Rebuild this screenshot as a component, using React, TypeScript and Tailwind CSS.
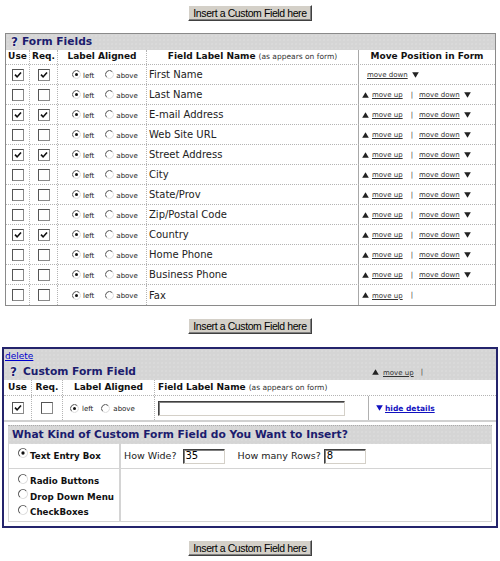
import React from "react";

const fields: [string, boolean][] = [
  ["First Name", true],
  ["Last Name", false],
  ["E-mail Address", true],
  ["Web Site URL", false],
  ["Street Address", true],
  ["City", false],
  ["State/Prov", false],
  ["Zip/Postal Code", false],
  ["Country", true],
  ["Home Phone", false],
  ["Business Phone", false],
  ["Fax", false],
];

function Up({ className = "" }: { className?: string }) {
  return (
    <svg width="7" height="6" viewBox="0 0 7 6" className={className}>
      <path d="M3.5 0.3 L6.8 5.7 L0.2 5.7Z" fill="#222" />
    </svg>
  );
}

function Down({ className = "", color = "#222" }: { className?: string; color?: string }) {
  return (
    <svg width="7" height="6" viewBox="0 0 7 6" className={className}>
      <path d="M0.2 0.3 L6.8 0.3 L3.5 5.7Z" fill={color} />
    </svg>
  );
}

function Check({ checked }: { checked: boolean }) {
  return (
    <span className="inline-flex w-[12px] h-[12px] items-center justify-center bg-white border border-t-[#555] border-l-[#555] border-r-[#8a8a8a] border-b-[#8a8a8a]">
      {checked && (
        <svg width="8" height="8" viewBox="0 0 8 8">
          <path d="M1 3.6 L3.1 5.9 L7 1.4" stroke="#111" strokeWidth="1.6" fill="none" />
        </svg>
      )}
    </span>
  );
}

function Radio({ on, size = 9, className = "" }: { on: boolean; size?: number; className?: string }) {
  return (
    <svg width={size} height={size} viewBox="0 0 9 9" className={className}>
      <circle cx="4.5" cy="4.5" r="4" fill="white" />
      <path d="M1.67 7.33 A4 4 0 0 1 7.33 1.67" stroke="#555" strokeWidth="1" fill="none" />
      <path d="M7.33 1.67 A4 4 0 0 1 1.67 7.33" stroke="#dcdcdc" strokeWidth="1" fill="none" />
      {on && <circle cx="4.5" cy="4.5" r="1.5" fill="#111" />}
    </svg>
  );
}

function InsertButton() {
  return (
    <div className="flex justify-center">
      <button className="h-[16px] w-[124px] bg-[#d4d0c8] border border-t-white border-l-white border-r-[#404040] border-b-[#404040] shadow-[inset_-1px_-1px_0_#808080] text-[10.5px] tracking-[-0.4px] leading-none text-black font-['Liberation_Sans',Arial,sans-serif] flex items-center justify-center">
        Insert a Custom Field here
      </button>
    </div>
  );
}

function Help() {
  return (
    <span className="text-[12px] font-bold text-[#1c1c6e] [text-shadow:0_0_1px_#fff,0_0_2px_#fff] leading-none">
      ?
    </span>
  );
}

const linkCls = "underline text-[7px] text-[#333] leading-none mt-[2px]";

function MoveCell({ first, last }: { first: boolean; last: boolean }) {
  if (first)
    return (
      <div className="flex items-center pl-[8px]">
        <span className={linkCls}>move down</span>
        <Down className="ml-[4px]" />
      </div>
    );
  return (
    <div className="flex items-center pl-[3px]">
      <Up />
      <span className={linkCls + " ml-[3px]"}>move up</span>
      <span className="ml-[8px] text-[7px] text-[#333] leading-none mt-[1px]">|</span>
      {!last && (
        <>
          <span className={linkCls + " ml-[6px]"}>move down</span>
          <Down className="ml-[4px]" />
        </>
      )}
    </div>
  );
}

const tiny = "text-[7px] text-[#222] leading-none mt-[3px]";

function LabelAligned({ pl }: { pl: string }) {
  return (
    <div className={"flex items-center " + pl}>
      <Radio on />
      <span className={"ml-[2px] " + tiny}>left</span>
      <Radio on={false} className="ml-[11px]" />
      <span className={"ml-[2px] " + tiny}>above</span>
    </div>
  );
}

const dot = "border-dotted border-[#b4b4b4]";
const grayBg =
  "bg-[#d5d5d5] bg-[radial-gradient(circle,#dfdfdf_0.6px,transparent_0.8px)] bg-[length:4px_4px]";

export default function App() {
  return (
    <div className="w-[500px] h-[561px] bg-white font-['DejaVu_Sans',Verdana,sans-serif] text-[#222] overflow-hidden">
      <div className="pt-[5px]">
        <InsertButton />
      </div>

      {/* Form Fields panel */}
      <div className="mt-[12px] ml-[5px] w-[491px] border border-[#8a8a8a]">
        <div className={"h-[16px] flex items-center pl-[5px] gap-[4px] " + grayBg}>
          <Help />
          <span className="text-[10.7px] font-bold text-[#1c1c6e] leading-none">Form Fields</span>
        </div>
        <div className={"grid grid-cols-[24px_28px_89px_212px_1fr] h-[15px] border-b " + dot}>
          <div className={"flex items-center justify-center border-r text-[9px] font-bold text-[#111] " + dot}>Use</div>
          <div className={"flex items-center justify-center border-r text-[9px] font-bold text-[#111] " + dot}>Req.</div>
          <div className={"flex items-center justify-center border-r text-[9px] font-bold text-[#111] " + dot}>Label Aligned</div>
          <div className="flex items-center justify-center border-r border-[#a8a8a8] text-[9px] font-bold text-[#111]">
            Field Label Name<span className="ml-[3px] font-normal text-[7.5px] text-[#333]">(as appears on form)</span>
          </div>
          <div className="flex items-center justify-center text-[9px] font-bold text-[#111]">Move Position in Form</div>
        </div>
        {fields.map(([name, checked], i) => (
          <div
            key={name}
            className={
              "grid grid-cols-[24px_28px_89px_212px_1fr] h-[20px] " +
              (i < fields.length - 1 ? "border-b " + dot : "")
            }
          >
            <div className={"flex items-center justify-center border-r " + dot}>
              <Check checked={checked} />
            </div>
            <div className={"flex items-center justify-center border-r " + dot}>
              <Check checked={checked} />
            </div>
            <div className={"border-r flex " + dot}>
              <LabelAligned pl="pl-[14px]" />
            </div>
            <div className="flex items-center pl-[2px] border-r border-[#a8a8a8] text-[10px] text-[#222]">{name}</div>
            <MoveCell first={i === 0} last={i === fields.length - 1} />
          </div>
        ))}
      </div>

      <div className="mt-[12px]">
        <InsertButton />
      </div>

      {/* Custom Form Field panel */}
      <div className="mt-[13px] ml-[2px] w-[496px] border-2 border-[#24246c]">
        <div className={grayBg}>
          <div className="h-[15px] flex items-center pl-[1px]">
            <span className="text-[9px] text-[#0000cc] underline leading-none">delete</span>
          </div>
          <div className="h-[16px] flex items-center">
            <div className="w-[365px] flex items-center pl-[6px] gap-[6px]">
              <Help />
              <span className="text-[10.7px] font-bold text-[#1c1c6e] leading-none">Custom Form Field</span>
            </div>
            <div className="flex items-center pl-[3px]">
              <Up />
              <span className={linkCls + " ml-[4px]"}>move up</span>
              <span className="ml-[7px] text-[7px] text-[#333] leading-none mt-[1px]">|</span>
            </div>
          </div>
        </div>
        <div className={"grid grid-cols-[28px_31px_92px_1fr] h-[16px] border-b " + dot}>
          <div className={"flex items-center justify-center border-r text-[9px] font-bold text-[#111] " + dot}>Use</div>
          <div className={"flex items-center justify-center border-r text-[9px] font-bold text-[#111] " + dot}>Req.</div>
          <div className={"flex items-center justify-center border-r text-[9px] font-bold text-[#111] " + dot}>Label Aligned</div>
          <div className="flex items-center pl-[3px] text-[9px] font-bold text-[#111]">
            Field Label Name<span className="ml-[3px] font-normal text-[7.5px] text-[#333]">(as appears on form)</span>
          </div>
        </div>
        <div className="grid grid-cols-[28px_31px_92px_214px_1fr] h-[24px]">
          <div className={"flex items-center justify-center border-r " + dot}>
            <Check checked />
          </div>
          <div className={"flex items-center justify-center border-r " + dot}>
            <Check checked={false} />
          </div>
          <div className={"border-r flex " + dot}>
            <div className="flex items-center pl-[7px]">
              <Radio on />
              <span className={"ml-[3px] " + tiny}>left</span>
              <Radio on={false} className="ml-[8px]" />
              <span className={"ml-[3px] " + tiny}>above</span>
            </div>
          </div>
          <div className="flex items-center pl-[3px] border-r border-[#b0b0b0]">
            <div className="w-[187px] h-[15px] bg-white border border-t-[#404040] border-l-[#404040] border-r-[#d4d0c8] border-b-[#d4d0c8] shadow-[inset_1px_1px_0_#808080]" />
          </div>
          <div className="flex items-center pl-[7px]">
            <Down color="#1010c0" />
            <span className="ml-[2px] text-[7.5px] font-bold text-[#1010c0] underline leading-none mt-[1px]">hide details</span>
          </div>
        </div>
        <div className="h-[2px] bg-[#d0d0d0]" />
        <div className="px-[4px] pt-[3px] pb-[4px]">
          <div className={"h-[19px] border-t border-dotted border-[#aaa] flex items-center pl-[4px] " + grayBg}>
            <span className="text-[10.7px] font-bold text-[#1c1c6e] leading-none">
              What Kind of Custom Form Field do You Want to Insert?
            </span>
          </div>
          <div className="grid grid-cols-[112px_1fr] border-l border-r border-[#d4d4d4]">
            <div className="h-[25px] border-r-2 border-b border-[#d4d4d4] flex items-center pl-[9px]">
              <Radio on size={10} className="mb-[6px]" />
              <span className="ml-[2px] text-[8.7px] font-bold text-[#111] leading-none">Text Entry Box</span>
            </div>
            <div className="h-[25px] border-b border-[#d4d4d4] flex items-center pl-[3px]">
              <span className="text-[9.5px] text-[#222] leading-none">How Wide?</span>
              <div className="ml-[6px] w-[42px] h-[15px] bg-white border border-t-[#404040] border-l-[#404040] border-r-[#d4d0c8] border-b-[#d4d0c8] shadow-[inset_1px_1px_0_#808080] flex items-center pl-[2px] text-[10px] text-black leading-none">
                35
              </div>
              <span className="ml-[13px] text-[9.5px] text-[#222] leading-none">How many Rows?</span>
              <div className="ml-[3px] w-[42px] h-[15px] bg-white border border-t-[#404040] border-l-[#404040] border-r-[#d4d0c8] border-b-[#d4d0c8] shadow-[inset_1px_1px_0_#808080] flex items-center pl-[2px] text-[10px] text-black leading-none">
                8
              </div>
            </div>
            <div className="h-[53px] border-r-2 border-b border-[#d4d4d4] flex flex-col pt-[5px] pl-[9px]">
              {["Radio Buttons", "Drop Down Menu", "CheckBoxes"].map((t) => (
                <div key={t} className="h-[15.5px] flex items-center">
                  <Radio on={false} size={10} className="mb-[6px]" />
                  <span className="ml-[2px] text-[8.7px] font-bold text-[#111] leading-none">{t}</span>
                </div>
              ))}
            </div>
            <div className="h-[53px] border-b border-[#d4d4d4]" />
          </div>
        </div>
      </div>

      <div className="mt-[12px]">
        <InsertButton />
      </div>
    </div>
  );
}
